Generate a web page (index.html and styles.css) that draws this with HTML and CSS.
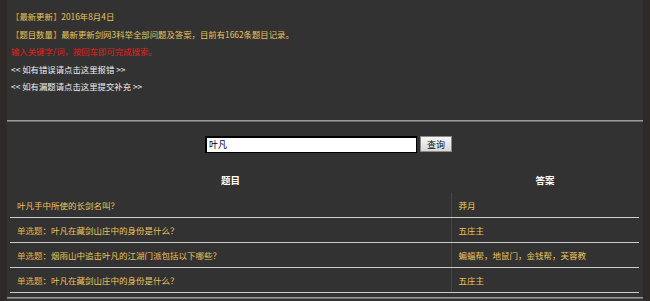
FILE: index.html
```html
<!DOCTYPE html>
<html>

<head>
    <meta charset="UTF-8">
    <title>剑网3科举题库</title>
    <link rel="stylesheet" href="styles.css">
</head>

<body>
    <div class="page">
        <div class="notice">
            <p class="line"><span class="bracket">【</span>最新更新<span class="bracket">】</span>2016年8月4日</p>
            <p class="line"><span class="bracket">【</span>题目数量<span class="bracket">】</span>最新更新剑网3科举全部问题及答案，目前有1662条题目记录。</p>
            <p class="line tip">输入关键字/词，按回车即可完成搜索。</p>
            <p class="line link">&lt;&lt; 如有错误请点击这里报错 &gt;&gt;</p>
            <p class="line link">&lt;&lt; 如有漏题请点击这里提交补充 &gt;&gt;</p>
        </div>

        <hr class="divider">

        <form class="search">
            <input type="text" class="search-input" value="叶凡">
            <button type="button" class="search-btn">查询</button>
        </form>

        <table class="results">
            <thead>
                <tr>
                    <th class="col-q">题目</th>
                    <th class="col-a">答案</th>
                </tr>
            </thead>
            <tbody>
                <tr>
                    <td class="col-q">叶凡手中所使的长剑名叫？</td>
                    <td class="col-a">莽月</td>
                </tr>
                <tr>
                    <td class="col-q"><span class="label">单选题</span>：叶凡在藏剑山庄中的身份是什么？</td>
                    <td class="col-a">五庄主</td>
                </tr>
                <tr>
                    <td class="col-q"><span class="label">单选题</span>：烟雨山中追击叶凡的江湖门派包括以下哪些？</td>
                    <td class="col-a">蝙蝠帮，地鼠门，金钱帮，芙蓉教</td>
                </tr>
                <tr>
                    <td class="col-q"><span class="label">单选题</span>：叶凡在藏剑山庄中的身份是什么？</td>
                    <td class="col-a">五庄主</td>
                </tr>
            </tbody>
        </table>

        <hr class="divider bottom">
    </div>
</body>

</html>
```

FILE: styles.css
```css
:root {
    --bg: #333232;
    --edge: #2f2927;
    --yellow: #eac35a;
    --orange: #e8821f;
    --red: #e3201c;
    --light: #ececec;
    --row-line: #cccccc;
}

body {
    margin: 0;
    background-color: var(--edge);
    font-family: "Noto Sans CJK SC", "Noto Sans", sans-serif;
    font-size: 9px;
}

.page {
    margin: 0 7px;
    height: 301px;
    background-color: var(--bg);
    overflow: hidden;
}

.notice {
    padding: 8px 0 0 4px;
    font-size: 8.4px;
}

.line {
    margin: 0;
    line-height: 17.5px;
    color: var(--yellow);
}

.bracket {
    color: var(--orange);
}

.tip {
    color: var(--red);
}

.link {
    color: var(--light);
}

.divider {
    margin: 24px 0 0;
    height: 0;
    border: none;
    border-top: 1px solid #9a9a9a;
    border-bottom: 1px solid #6a6a6a;
}

.divider.bottom {
    margin-top: 4px;
}

.search {
    display: flex;
    justify-content: center;
    align-items: center;
    gap: 3px;
    margin: 14px 0 0 7px;
}

.search-input {
    box-sizing: border-box;
    width: 212px;
    height: 17px;
    margin: 0;
    padding: 0 2px;
    border: 1px solid #000;
    border-top-width: 2px;
    border-left-width: 2px;
    background: #fff;
    font-family: "Noto Sans CJK SC", sans-serif;
    font-size: 9px;
    color: #000;
}

.search-btn {
    box-sizing: border-box;
    width: 32px;
    height: 16px;
    margin: 0;
    padding: 0;
    border: 1px solid #8a8a8a;
    background: linear-gradient(#f6f6f6, #d8d8d8);
    font-family: "Noto Sans CJK SC", sans-serif;
    font-size: 9px;
    color: #111;
}

.results {
    width: 629px;
    margin: 15px 0 0 3px;
    border-collapse: collapse;
    font-size: 8.5px;
}

.results th {
    height: 25px;
    padding: 0;
    color: #fff;
    font-size: 9.5px;
    font-weight: bold;
    text-align: center;
}

.results td {
    box-sizing: border-box;
    height: 25px;
    padding: 0 7px;
    color: var(--yellow);
    border-bottom: 1px solid var(--row-line);
}

.results .col-q {
    width: 441px;
}

.results td.col-a {
    border-left: 1px solid #4a4444;
}

.label {
    color: #e5ae45;
}
```
